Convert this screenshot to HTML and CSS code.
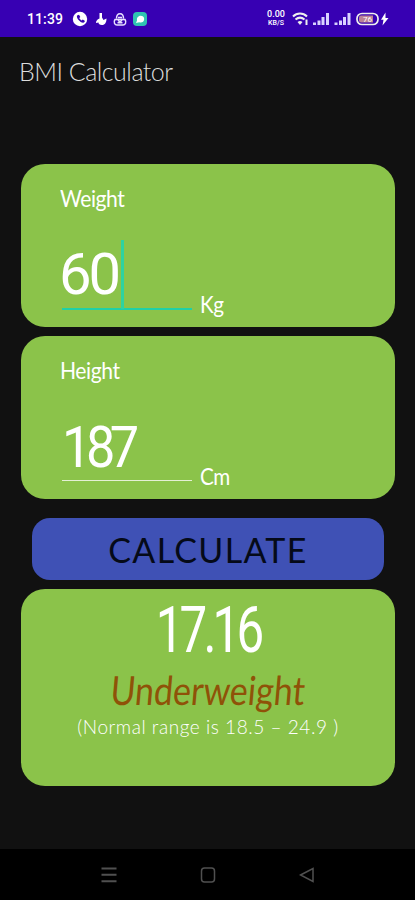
FILE: index.html
```
<!DOCTYPE html>
<html lang="en">
  <head>
    <meta charset="utf-8">
    <title>BMI Calculator</title>
    <link rel="stylesheet" href="styles.css">
  </head>
  <body>
    <div class="statusbar">
      <span class="time">11:39</span>
      <svg class="notifications" width="76" height="18" viewBox="0 0 76 18">
        <circle cx="8" cy="9" r="7.2" fill="#fff"/>
        <path d="M5 5.500c-1 3 4 8 7 7l1-1.600-2.200-1.500-1.200 1c-1-.5-2-1.500-2.300-2.400l1-1.100L7 4.700z" fill="#3700b3"/>
        <path d="M27.500 3h2.500v4.500l1.500 2.500 3-1.500c0 4-1.500 6.500-4.500 6.500-2.500 0-3.500-1-3.500-2.500l-2.500.5c0-2 1-3.500 3.500-4.500z" fill="#fff"/>
        <path d="M44.500 8.500c0-6.500 7-6.500 7 0M43 9.500h10c2 3 0 5.500-2 5.500h-6c-2 0-4-2.500-2-5.500zM46 7.500h4M45.500 9l2.500 3.500 2.500-3.500M45.500 12.800h5" fill="none" stroke="#e6e0ff" stroke-width="1.500"/>
        <rect x="61" y="2" width="14" height="14" rx="4" fill="#2fc4b2"/>
        <path d="M64 13l1-2.500c-.8-6 7.200-6 7.200-1.500 0 3-3 4.200-5 3.200z" fill="#fff"/>
      </svg>
      <span class="speed"><b>0.00</b><b>KB/S</b></span>
      <svg class="signals" width="98" height="18" viewBox="0 0 98 18">
        <g fill="none" stroke="#eee" stroke-width="2">
          <path d="M1 6.500c4-4 10-4 14 0M3.500 9.500c3-2.500 6-2.500 9 0"/>
          <path d="M14.500 9.500v5.500"/>
        </g>
        <path d="M5.500 12c2-1.300 3-1.300 5 0L8 15z" fill="#eee"/>
        <path d="M21 12.500h3V15h-3zM25.500 10.500h3V15h-3zM29.500 7h3v8h-3zM34 3h3v12h-3zM42.500 12.500h3V15h-3zM47 10.500h3V15h-3zM51 7h3v8h-3zM55.500 3h3v12h-3z" fill="#d9d2ff"/>
        <rect x="65" y="3.500" width="21" height="11" rx="5" fill="#3700b3" stroke="#eee" stroke-width="1.700"/>
        <path d="M69 5.500h12v7H69q-2 0-2-2v-3q0-2 2-2z" fill="#bb8296"/>
        <text x="71" y="12" font-size="8" fill="#fff">76</text>
        <path d="M93.500 2.500L89 9.800h2.500L90.500 15.500 96.500 8h-3z" fill="#fff"/>
      </svg>
    </div>

    <h1>BMI Calculator</h1>

    <main>
      <div class="card">
        <label for="weight">Weight</label>
        <div class="field">
          <div class="entry active">
            <input type="text" id="weight" value="60">
            <span class="caret"></span>
          </div>
          <span class="unit">Kg</span>
        </div>
      </div>

      <div class="card">
        <label for="height">Height</label>
        <div class="field">
          <div class="entry">
            <input type="text" id="height" value="187">
          </div>
          <span class="unit">Cm</span>
        </div>
      </div>

      <button type="button">CALCULATE</button>

      <div class="card result">
        <div class="bmi">17.16</div>
        <div class="status">Underweight</div>
        <div class="range">(Normal range is 18.5 – 24.9 )</div>
      </div>
    </main>

    <div class="navbar">
      <svg width="16" height="18" viewBox="0 0 16 18">
        <path d="M.5 2.500h15M.5 8.700h15M.5 15.300h15" stroke="#505050" stroke-width="2"/>
      </svg>
      <svg width="16" height="18" viewBox="0 0 16 18">
        <rect x="1.500" y="2" width="13" height="14" rx="3" fill="none" stroke="#505050" stroke-width="1.500"/>
      </svg>
      <svg width="16" height="18" viewBox="0 0 16 18">
        <path d="M1.500 9L14 2.500v13z" fill="none" stroke="#505050" stroke-width="1.500"/>
      </svg>
    </div>
  </body>
</html>
```

FILE: styles.css
```
* {
  box-sizing: border-box;
}

body {
  font-family: Lato, "Open Sans", sans-serif;
  margin: 0;
  height: 900px;
  display: flex;
  flex-direction: column;
  background-color: #111;
  color: #fff;
  overflow: hidden;
}

.statusbar {
  height: 37px;
  display: flex;
  align-items: center;
  padding-left: 27px;
  background-color: #3700b3;
}

.time {
  width: 45px;
  font-family: Roboto, sans-serif;
  font-size: 14px;
  letter-spacing: 0.1px;
  font-weight: 500;
}

.speed {
  width: 22px;
  margin-left: 117px;
  display: flex;
  flex-direction: column;
  align-items: center;
  font-family: Roboto, sans-serif;
  font-size: 9px;
  line-height: 9px;
}

.speed b {
  font-weight: 500;
}

.speed b + b {
  font-size: 7px;
  line-height: 8px;
}

.signals {
  margin-left: 5px;
  font-family: Roboto, sans-serif;
}

h1 {
  margin: 18px 0 0 19px;
  height: 33px;
  font-size: 25px;
  line-height: 32px;
  font-weight: 300;
  letter-spacing: -0.5px;
  color: #ddd;
}

main {
  flex: 1;
  display: flex;
  flex-direction: column;
  align-items: center;
  padding: 76px 20px 0 21px;
}

.card {
  width: 374px;
  height: 163px;
  margin-bottom: 9px;
  padding: 18px 39px 0;
  background-color: #8bc34a;
  border-radius: 24px;
}

label {
  display: block;
  height: 32px;
  margin-bottom: 23px;
  font-size: 24px;
  line-height: 32px;
  letter-spacing: -0.5px;
  transform: scaleX(0.88);
  transform-origin: left;
}

.field {
  display: flex;
  height: 83px;
  padding-left: 2px;
}

.entry {
  position: relative;
  width: 130px;
  height: 72px;
  border-bottom: 1px solid #e4f0d4;
}

.entry.active {
  height: 73px;
  border-bottom: 2px solid #1fd0a8;
}

input {
  display: block;
  width: 130px;
  height: 71px;
  padding: 5px 0 0;
  border: none;
  outline: none;
  background: none;
  color: #fff;
  font-family: Roboto, sans-serif;
  font-size: 58px;
  line-height: 66px;
  letter-spacing: -6px;
  transform: scaleX(0.9);
  transform-origin: left;
}

.active input {
  margin-left: -3px;
  padding-top: 3px;
  letter-spacing: -3px;
  transform: scaleX(1);
}

/* text cursor of the focused field */
.caret {
  position: absolute;
  left: 59px;
  top: 3px;
  width: 3px;
  height: 69px;
  background-color: #2fd3a0;
}

.unit {
  align-self: flex-end;
  margin-left: 8px;
  font-size: 24px;
  line-height: 32px;
  letter-spacing: -0.5px;
  transform: scaleX(0.86);
  transform-origin: left;
}

button {
  width: 352px;
  height: 62px;
  margin: 10px 0 9px;
  padding: 0;
  border: none;
  border-radius: 18px;
  background-color: #3f51b5;
  color: #050a18;
  font-family: inherit;
  font-size: 34px;
  letter-spacing: 1.3px;
}

.result {
  height: 197px;
  margin-bottom: 0;
  padding: 0;
  text-align: center;
  white-space: nowrap;
}

.bmi {
  height: 76px;
  padding-top: 5px;
  font-family: Roboto, sans-serif;
  font-size: 64px;
  line-height: 73px;
  letter-spacing: -5px;
  transform: scaleX(0.77);
}

.status {
  height: 48px;
  font-size: 40px;
  line-height: 50px;
  color: #8f5208;
  transform: scaleX(0.85) skewX(-6deg);
}

.range {
  height: 24px;
  font-size: 19px;
  line-height: 27px;
  font-weight: 300;
  letter-spacing: 0.55px;
}

.navbar {
  height: 51px;
  display: flex;
  align-items: center;
  gap: 83px;
  padding-left: 101px;
  background-color: #000;
}
```
